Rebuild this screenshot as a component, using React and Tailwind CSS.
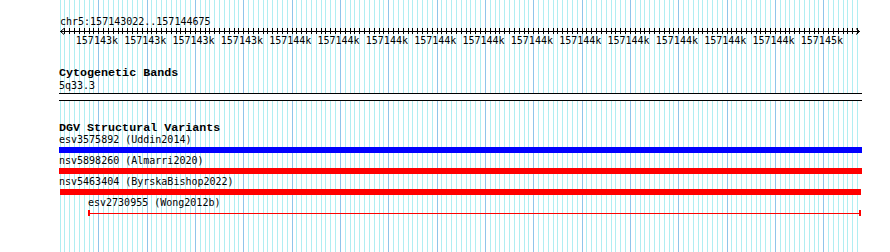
import React from "react";

const START_X = 59.66;
const MINOR_STEP = 4.8333;

// gridlines every 10bp, a darker one every 100bp
const gridLines = Array.from({ length: 166 }, (_, i) => ({
  x: Math.round(START_X + i * MINOR_STEP),
  major: i % 10 === 8,
}));

const tickLabels = Array.from({ length: 16 }, (_, i) => {
  const k = i < 4 ? 157143 : i < 15 ? 157144 : 157145;
  return { x: 98.33 + i * 48.333, text: `${k}k` };
});

const variants = [
  { name: "esv3575892 (Uddin2014)", kind: "blue" },
  { name: "nsv5898260 (Almarri2020)", kind: "red" },
  { name: "nsv5463404 (ByrskaBishop2022)", kind: "red-short" },
  { name: "esv2730955 (Wong2012b)", kind: "line" },
];

function Grid() {
  return (
    <svg
      className="absolute inset-0"
      width="890"
      height="252"
      shapeRendering="crispEdges"
    >
      {gridLines.map((g, i) => (
        <rect
          key={i}
          x={g.x}
          y="0"
          width="1"
          height="252"
          fill={g.major ? "#8fc5ea" : "#b0eef2"}
        />
      ))}
    </svg>
  );
}

function Ruler() {
  return (
    <svg width="803" height="8" className="block" shapeRendering="crispEdges">
      <rect x="1" y="4" width="800" height="1" fill="#000" />
      {gridLines
        .filter((g) => g.x > 62 && g.x < 858)
        .map((g, i) => (
          <rect key={i} x={g.x - 59} y="1" width="1" height="6" fill="#000" />
        ))}
      <path d="M5 1.5 L1.5 4.5 L5 7.5" stroke="#000" fill="none" shapeRendering="auto" />
      <path d="M797 1.5 L800.5 4.5 L797 7.5" stroke="#000" fill="none" shapeRendering="auto" />
    </svg>
  );
}

function Variant({ v }) {
  return (
    <div className="pb-[2px]">
      <div
        className={
          v.kind === "line"
            ? "h-[11px] leading-[11px] pl-[29px] whitespace-nowrap"
            : "h-[11px] leading-[11px] whitespace-nowrap"
        }
      >
        {v.name}
      </div>
      <div className="mt-[2px] h-[6px]">
        {v.kind === "blue" && <div className="h-[6px] bg-[#0000ff]" />}
        {v.kind === "red" && <div className="h-[6px] bg-[#ff0000]" />}
        {v.kind === "red-short" && (
          <div className="h-[6px] ml-[1px] mr-[1px] bg-[#ff0000]" />
        )}
        {v.kind === "line" && (
          <div className="flex items-center h-[6px] ml-[29px] mr-[1px]">
            <div className="w-[2px] h-[6px] bg-[#ff0000]" />
            <div className="flex-1 h-px bg-[#ff0000]" />
            <div className="w-[2px] h-[6px] bg-[#ff0000]" />
          </div>
        )}
      </div>
    </div>
  );
}

export default function App() {
  return (
    <div className="relative w-[890px] h-[252px] overflow-hidden bg-white text-black font-['DejaVu_Sans_Mono',monospace] text-[10px]">
      <Grid />

      <div className="relative w-[862px] pl-[59px] pt-[16px]">
        {/* overview ruler */}
        <div className="h-[11px] leading-[11px] pl-px">chr5:157143022..157144675</div>
        <Ruler />
        <div className="relative h-[11px] leading-[11px]">
          {tickLabels.map((t, i) => (
            <span
              key={i}
              className="absolute top-0 w-[42px] text-center"
              style={{ left: t.x - 59 - 22.5 }}
            >
              {t.text}
            </span>
          ))}
        </div>

        {/* Cytogenetic Bands */}
        <div className="mt-[22px] h-[11px] leading-[11px] font-['Liberation_Mono',monospace] font-bold text-[11.7px]">
          Cytogenetic Bands
        </div>
        <div className="mt-[1px] h-[11px] leading-[11px]">5q33.3</div>
        <div className="mt-[2px] h-[8px] border-y border-black bg-white" />

        {/* DGV */}
        <div className="mt-[22px] h-[11px] leading-[11px] font-['Liberation_Mono',monospace] font-bold text-[11.7px]">
          DGV Structural Variants
        </div>
        {variants.map((v) => (
          <Variant key={v.name} v={v} />
        ))}
      </div>
    </div>
  );
}
